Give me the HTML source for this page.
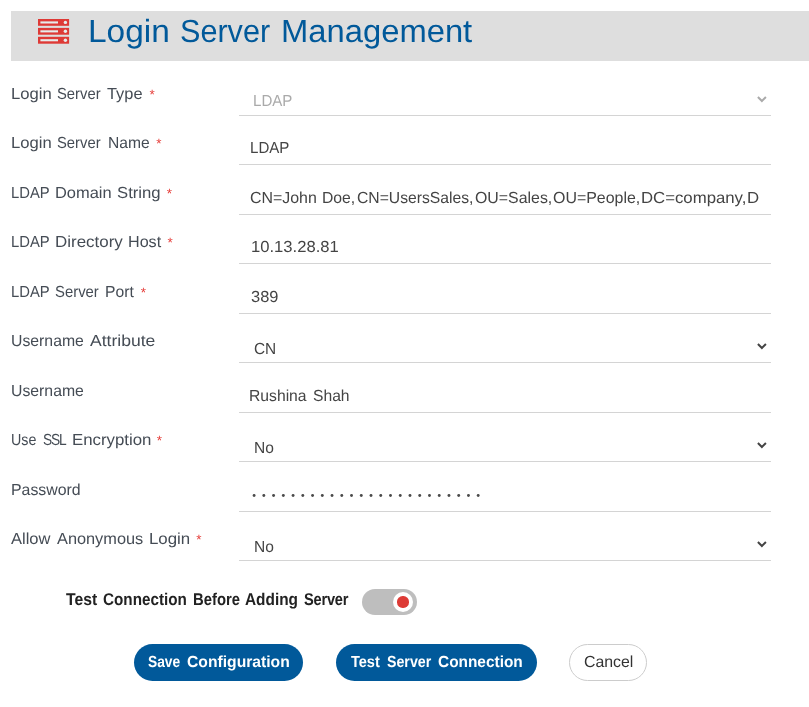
<!DOCTYPE html>
<html>
<head>
<meta charset="utf-8">
<title>Login Server Management</title>
<style>
*{box-sizing:border-box;margin:0;padding:0}
html,body{width:809px;height:707px;background:#fff;overflow:hidden}
body{font-family:"Liberation Sans",sans-serif;color:#444;position:relative}
.hdr{position:absolute;left:11px;top:11px;width:798px;height:50px;background:#dedede}
.hdr svg{position:absolute;left:27px;top:7.8px}
.w{position:absolute;white-space:nowrap;display:block;transform-origin:0 0;text-rendering:geometricPrecision}
#pg{position:absolute;left:0;top:0;width:809px;height:707px;will-change:transform}
.fld{position:absolute;left:239px;width:532px;height:1px;background:#d4d4d4}
.chev{position:absolute;left:757px;width:10px;height:7px}
.dots{position:absolute;left:250px;top:492.4px;width:240px;height:6px}
.tog{position:absolute;left:362px;top:589px;width:55px;height:26px;border-radius:13px;background:#bebebe}
.tog b{position:absolute;left:31px;top:3px;width:20px;height:20px;border-radius:50%;background:#fff}
.tog b:after{content:"";position:absolute;left:4.4px;top:4.4px;width:11.2px;height:11.2px;border-radius:50%;background:#dd3b36}
.btn{position:absolute;top:644px;height:37px;border-radius:18.5px;background:#01599a}
.btn.c{background:#fff;border:1px solid #ccc}
</style>
</head>
<body>
<div id="pg">
<div class="hdr">
<svg width="32" height="25" viewBox="0 0 32 25"><g fill="#de3a36"><rect x="0" y="0" width="31.1" height="6.8"/><rect x="0" y="8.9" width="31.1" height="6.8"/><rect x="0" y="17.8" width="31.1" height="6.9"/></g><g fill="#e6ecec"><rect x="2.4" y="2.4" width="17.6" height="2.1"/><rect x="2.4" y="11.3" width="17.6" height="2.1"/><rect x="2.4" y="20.2" width="17.6" height="2.1"/><circle cx="27.4" cy="3.4" r="1.7"/><circle cx="27.4" cy="12.3" r="1.7"/><circle cx="27.4" cy="21.2" r="1.7"/></g></svg>
</div>
<div class="fld" style="top:115px"></div>
<div class="fld" style="top:164px"></div>
<div class="fld" style="top:214px"></div>
<div class="fld" style="top:263px"></div>
<div class="fld" style="top:313px"></div>
<div class="fld" style="top:362px"></div>
<div class="fld" style="top:412px"></div>
<div class="fld" style="top:461px"></div>
<div class="fld" style="top:511px"></div>
<div class="fld" style="top:560px"></div>
<svg class="chev" style="top:95.8px" viewBox="0 0 10 7"><path d="M0.9 1 L4.9 5 L8.9 1" fill="none" stroke="#aaa" stroke-width="2"/></svg>
<svg class="chev" style="top:342.8px" viewBox="0 0 10 7"><path d="M0.9 1 L4.9 5 L8.9 1" fill="none" stroke="#444" stroke-width="2"/></svg>
<svg class="chev" style="top:441.8px" viewBox="0 0 10 7"><path d="M0.9 1 L4.9 5 L8.9 1" fill="none" stroke="#444" stroke-width="2"/></svg>
<svg class="chev" style="top:540.8px" viewBox="0 0 10 7"><path d="M0.9 1 L4.9 5 L8.9 1" fill="none" stroke="#444" stroke-width="2"/></svg>

<svg class="dots" viewBox="0 0 240 6"><g fill="#4a4a4a"><circle cx="4.10" cy="3.5" r="1.45"/><circle cx="13.84" cy="3.5" r="1.45"/><circle cx="23.59" cy="3.5" r="1.45"/><circle cx="33.33" cy="3.5" r="1.45"/><circle cx="43.07" cy="3.5" r="1.45"/><circle cx="52.81" cy="3.5" r="1.45"/><circle cx="62.56" cy="3.5" r="1.45"/><circle cx="72.30" cy="3.5" r="1.45"/><circle cx="82.04" cy="3.5" r="1.45"/><circle cx="91.79" cy="3.5" r="1.45"/><circle cx="101.53" cy="3.5" r="1.45"/><circle cx="111.27" cy="3.5" r="1.45"/><circle cx="121.02" cy="3.5" r="1.45"/><circle cx="130.76" cy="3.5" r="1.45"/><circle cx="140.50" cy="3.5" r="1.45"/><circle cx="150.25" cy="3.5" r="1.45"/><circle cx="159.99" cy="3.5" r="1.45"/><circle cx="169.73" cy="3.5" r="1.45"/><circle cx="179.47" cy="3.5" r="1.45"/><circle cx="189.22" cy="3.5" r="1.45"/><circle cx="198.96" cy="3.5" r="1.45"/><circle cx="208.70" cy="3.5" r="1.45"/><circle cx="218.45" cy="3.5" r="1.45"/><circle cx="228.19" cy="3.5" r="1.45"/></g></svg>
<div class="tog"><b></b></div>
<div class="btn" style="left:134px;width:169px"></div>
<div class="btn" style="left:336px;width:201px"></div>
<div class="btn c" style="left:569px;width:78px"></div>
<span class="w" style="left:87.81px;top:9px;font-size:32px;line-height:45px;color:#01599a;letter-spacing:0.000px;transform:translateY(0.45px) scaleX(1.0456)">Login</span>
<span class="w" style="left:179.94px;top:9px;font-size:32px;line-height:45px;color:#01599a;letter-spacing:0.000px;transform:translateY(0.45px) scaleX(0.9563)">Server</span>
<span class="w" style="left:280.95px;top:9px;font-size:32px;line-height:45px;color:#01599a;letter-spacing:0.000px;transform:translateY(0.45px) scaleX(1.0238)">Management</span>
<span class="w" style="left:10.76px;top:84px;font-size:16px;line-height:22px;color:#454c55;letter-spacing:0.000px;transform:scaleX(1.0389)">Login</span>
<span class="w" style="left:56.90px;top:84px;font-size:16px;line-height:22px;color:#454c55;letter-spacing:0.000px;transform:scaleX(0.9247)">Server</span>
<span class="w" style="left:107.30px;top:84px;font-size:16px;line-height:22px;color:#454c55;letter-spacing:0.000px;transform:scaleX(1.0233)">Type</span>
<span class="w" style="left:10.76px;top:133px;font-size:16px;line-height:22px;color:#454c55;letter-spacing:0.000px;transform:scaleX(1.0389)">Login</span>
<span class="w" style="left:56.90px;top:133px;font-size:16px;line-height:22px;color:#454c55;letter-spacing:0.000px;transform:scaleX(0.9247)">Server</span>
<span class="w" style="left:107.52px;top:133px;font-size:16px;line-height:22px;color:#454c55;letter-spacing:0.000px;transform:scaleX(0.9765)">Name</span>
<span class="w" style="left:10.88px;top:183px;font-size:16px;line-height:22px;color:#454c55;letter-spacing:0.000px;transform:scaleX(0.9246)">LDAP</span>
<span class="w" style="left:54.67px;top:183px;font-size:16px;line-height:22px;color:#454c55;letter-spacing:0.000px;transform:scaleX(1.0275)">Domain</span>
<span class="w" style="left:117.40px;top:183px;font-size:16px;line-height:22px;color:#454c55;letter-spacing:0.000px;transform:scaleX(1.0440)">String</span>
<span class="w" style="left:10.88px;top:232px;font-size:16px;line-height:22px;color:#454c55;letter-spacing:0.000px;transform:scaleX(0.9246)">LDAP</span>
<span class="w" style="left:54.64px;top:232px;font-size:16px;line-height:22px;color:#454c55;letter-spacing:0.000px;transform:scaleX(1.0586)">Directory</span>
<span class="w" style="left:127.59px;top:232px;font-size:16px;line-height:22px;color:#454c55;letter-spacing:0.000px;transform:scaleX(1.0076)">Host</span>
<span class="w" style="left:10.88px;top:282px;font-size:16px;line-height:22px;color:#454c55;letter-spacing:0.000px;transform:scaleX(0.9246)">LDAP</span>
<span class="w" style="left:54.80px;top:282px;font-size:16px;line-height:22px;color:#454c55;letter-spacing:0.000px;transform:scaleX(0.9289)">Server</span>
<span class="w" style="left:105.42px;top:282px;font-size:16px;line-height:22px;color:#454c55;letter-spacing:0.000px;transform:scaleX(0.9793)">Port</span>
<span class="w" style="left:10.71px;top:331px;font-size:16px;line-height:22px;color:#454c55;letter-spacing:0.000px;transform:scaleX(0.9876)">Username</span>
<span class="w" style="left:90.00px;top:331px;font-size:16px;line-height:22px;color:#454c55;letter-spacing:0.000px;transform:scaleX(1.0974)">Attribute</span>
<span class="w" style="left:10.71px;top:381px;font-size:16px;line-height:22px;color:#454c55;letter-spacing:0.000px;transform:scaleX(0.9876)">Username</span>
<span class="w" style="left:10.81px;top:430px;font-size:16px;line-height:22px;color:#454c55;letter-spacing:0.000px;transform:scaleX(0.8928)">Use</span>
<span class="w" style="left:42.70px;top:430px;font-size:16px;line-height:22px;color:#454c55;letter-spacing:-1.393px;transform:scaleX(0.8600)">SSL</span>
<span class="w" style="left:72.15px;top:430px;font-size:16px;line-height:22px;color:#454c55;letter-spacing:0.000px;transform:scaleX(1.0503)">Encryption</span>
<span class="w" style="left:10.71px;top:480px;font-size:16px;line-height:22px;color:#454c55;letter-spacing:0.000px;transform:scaleX(0.9919)">Password</span>
<span class="w" style="left:10.60px;top:529px;font-size:16px;line-height:22px;color:#454c55;letter-spacing:0.000px;transform:scaleX(1.0315)">Allow</span>
<span class="w" style="left:56.90px;top:529px;font-size:16px;line-height:22px;color:#454c55;letter-spacing:0.000px;transform:scaleX(1.0202)">Anonymous</span>
<span class="w" style="left:149.45px;top:529px;font-size:16px;line-height:22px;color:#454c55;letter-spacing:0.000px;transform:scaleX(1.0523)">Login</span>
<span class="w" style="left:253.26px;top:91px;font-size:16px;line-height:22px;color:#aaa;letter-spacing:0.000px;transform:scaleX(0.9421)">LDAP</span>
<span class="w" style="left:249.56px;top:138px;font-size:16px;line-height:22px;color:#444;letter-spacing:0.000px;transform:scaleX(0.9421)">LDAP</span>
<span class="w" style="left:249.90px;top:188px;font-size:16px;line-height:22px;color:#444;letter-spacing:0.000px;transform:scaleX(0.9947)">CN=John</span>
<span class="w" style="left:321.92px;top:188px;font-size:16px;line-height:22px;color:#444;letter-spacing:0.000px;transform:scaleX(0.9830)">Doe,</span>
<span class="w" style="left:356.90px;top:188px;font-size:16px;line-height:22px;color:#444;letter-spacing:0.000px;transform:scaleX(0.9809)">CN=UsersSales,</span>
<span class="w" style="left:475.10px;top:188px;font-size:16px;line-height:22px;color:#444;letter-spacing:0.000px;transform:scaleX(0.9927)">OU=Sales,</span>
<span class="w" style="left:552.80px;top:188px;font-size:16px;line-height:22px;color:#444;letter-spacing:0.000px;transform:scaleX(0.9958)">OU=People,</span>
<span class="w" style="left:640.75px;top:188px;font-size:16px;line-height:22px;color:#444;letter-spacing:-0.000px;transform:scaleX(1.0475)">DC=company,</span>
<span class="w" style="left:747.15px;top:188px;font-size:16px;line-height:22px;color:#444;letter-spacing:0.000px;transform:scaleX(1.0500)">D</span>
<span class="w" style="left:250.76px;top:237px;font-size:16px;line-height:22px;color:#444;letter-spacing:0.000px;transform:scaleX(1.0380)">10.13.28.81</span>
<span class="w" style="left:250.60px;top:287px;font-size:16px;line-height:22px;color:#444;letter-spacing:0.000px;transform:scaleX(1.0262)">389</span>
<span class="w" style="left:253.50px;top:339px;font-size:16px;line-height:22px;color:#444;letter-spacing:0.000px;transform:scaleX(0.9621)">CN</span>
<span class="w" style="left:249.22px;top:386px;font-size:16px;line-height:22px;color:#444;letter-spacing:0.000px;transform:scaleX(0.9809)">Rushina</span>
<span class="w" style="left:313.20px;top:386px;font-size:16px;line-height:22px;color:#444;letter-spacing:0.000px;transform:scaleX(0.9789)">Shah</span>
<span class="w" style="left:253.53px;top:438px;font-size:16px;line-height:22px;color:#444;letter-spacing:0.000px;transform:scaleX(0.9716)">No</span>
<span class="w" style="left:253.53px;top:537px;font-size:16px;line-height:22px;color:#444;letter-spacing:0.000px;transform:scaleX(0.9716)">No</span>
<span class="w" style="left:65.60px;top:588px;font-size:17px;line-height:24px;color:#222;letter-spacing:0.000px;transform:scaleX(0.9256);font-weight:bold">Test</span>
<span class="w" style="left:103.00px;top:588px;font-size:17px;line-height:24px;color:#222;letter-spacing:0.000px;transform:scaleX(0.8968);font-weight:bold">Connection</span>
<span class="w" style="left:192.63px;top:588px;font-size:17px;line-height:24px;color:#222;letter-spacing:0.000px;transform:scaleX(0.8723);font-weight:bold">Before</span>
<span class="w" style="left:244.50px;top:588px;font-size:17px;line-height:24px;color:#222;letter-spacing:0.000px;transform:scaleX(0.9045);font-weight:bold">Adding</span>
<span class="w" style="left:303.50px;top:588px;font-size:17px;line-height:24px;color:#222;letter-spacing:-0.245px;transform:scaleX(0.8600);font-weight:bold">Server</span>
<span class="w" style="left:147.80px;top:652px;font-size:16px;line-height:22px;color:#fff;letter-spacing:0.000px;transform:scaleX(0.8621);font-weight:bold">Save</span>
<span class="w" style="left:186.70px;top:652px;font-size:16px;line-height:22px;color:#fff;letter-spacing:0.000px;transform:scaleX(0.9799);font-weight:bold">Configuration</span>
<span class="w" style="left:350.60px;top:652px;font-size:16px;line-height:22px;color:#fff;letter-spacing:0.000px;transform:scaleX(0.9079);font-weight:bold">Test</span>
<span class="w" style="left:387.00px;top:652px;font-size:16px;line-height:22px;color:#fff;letter-spacing:0.000px;transform:scaleX(0.8872);font-weight:bold">Server</span>
<span class="w" style="left:437.70px;top:652px;font-size:16px;line-height:22px;color:#fff;letter-spacing:0.000px;transform:scaleX(0.9631);font-weight:bold">Connection</span>
<span class="w" style="left:583.70px;top:652px;font-size:16px;line-height:22px;color:#333;letter-spacing:0.000px;transform:scaleX(0.9909)">Cancel</span>
<span class="w" style="left:149.40px;top:85.00px;font-size:13.5px;line-height:19px;color:#e53935">*</span>
<span class="w" style="left:156.20px;top:134.00px;font-size:13.5px;line-height:19px;color:#e53935">*</span>
<span class="w" style="left:166.70px;top:184.00px;font-size:13.5px;line-height:19px;color:#e53935">*</span>
<span class="w" style="left:167.40px;top:233.00px;font-size:13.5px;line-height:19px;color:#e53935">*</span>
<span class="w" style="left:140.80px;top:283.00px;font-size:13.5px;line-height:19px;color:#e53935">*</span>
<span class="w" style="left:156.80px;top:431.00px;font-size:13.5px;line-height:19px;color:#e53935">*</span>
<span class="w" style="left:196.30px;top:530.00px;font-size:13.5px;line-height:19px;color:#e53935">*</span>
</div>
</body>
</html>
